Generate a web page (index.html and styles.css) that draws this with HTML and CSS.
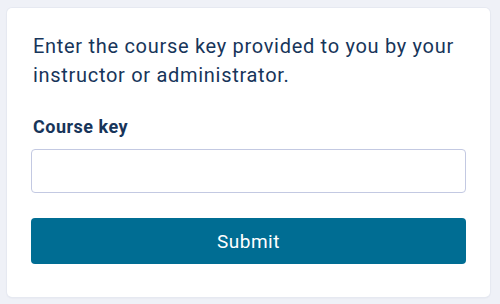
FILE: index.html
```html
<!DOCTYPE html>
<html>
  <head>
    <meta charset="utf-8" />
    <title>Course key</title>
    <link rel="stylesheet" href="styles.css">
  </head>

  <body>
    <!-- 课程密钥卡片 -->
    <div class="card">
      <p class="intro">
        Enter the course key provided to you by your instructor or administrator.
      </p>

      <label class="field-label" for="courseKey">Course key</label>
      <input class="field-input" id="courseKey" type="text" />

      <button class="submit-button">Submit</button>
    </div>
  </body>
</html>
```

FILE: styles.css
```css
/* 基础样式 */
html,
body {
  margin: 0;
  padding: 0;
  font-family: Roboto, "Liberation Sans", sans-serif;
  background-color: #eff1f7;
  color: #17355a;
}

body {
  padding: 8px 10px 7px 7px;
}

/* 卡片 */
.card {
  display: flex;
  flex-direction: column;
  background-color: #fff;
  border-radius: 5px;
  box-shadow: 0 0 0 1px #e6e9f1, 0 1px 2px rgba(30, 40, 80, 0.08);
  padding: 24px 24px 33px 24px;
  height: 289px;
  box-sizing: border-box;
}

.intro {
  margin: 0 0 25px 2px;
  font-size: 20px;
  line-height: 29px;
  letter-spacing: 0.7px;
}

.field-label {
  font-size: 18px;
  font-weight: bold;
  line-height: 24px;
  letter-spacing: 0.5px;
  margin-left: 2px;
  margin-bottom: 10px;
}

.field-input {
  height: 44px;
  box-sizing: border-box;
  border: 1px solid #c3c9e2;
  border-radius: 4px;
  margin: 0 0 25px 0;
  padding: 0 12px;
  font-size: 16px;
}

.submit-button {
  height: 46px;
  border: none;
  border-radius: 4px;
  background-color: #006d93;
  color: #fff;
  font-family: inherit;
  font-size: 19px;
  font-weight: 400;
  letter-spacing: 0.5px;
  cursor: pointer;
}
```
